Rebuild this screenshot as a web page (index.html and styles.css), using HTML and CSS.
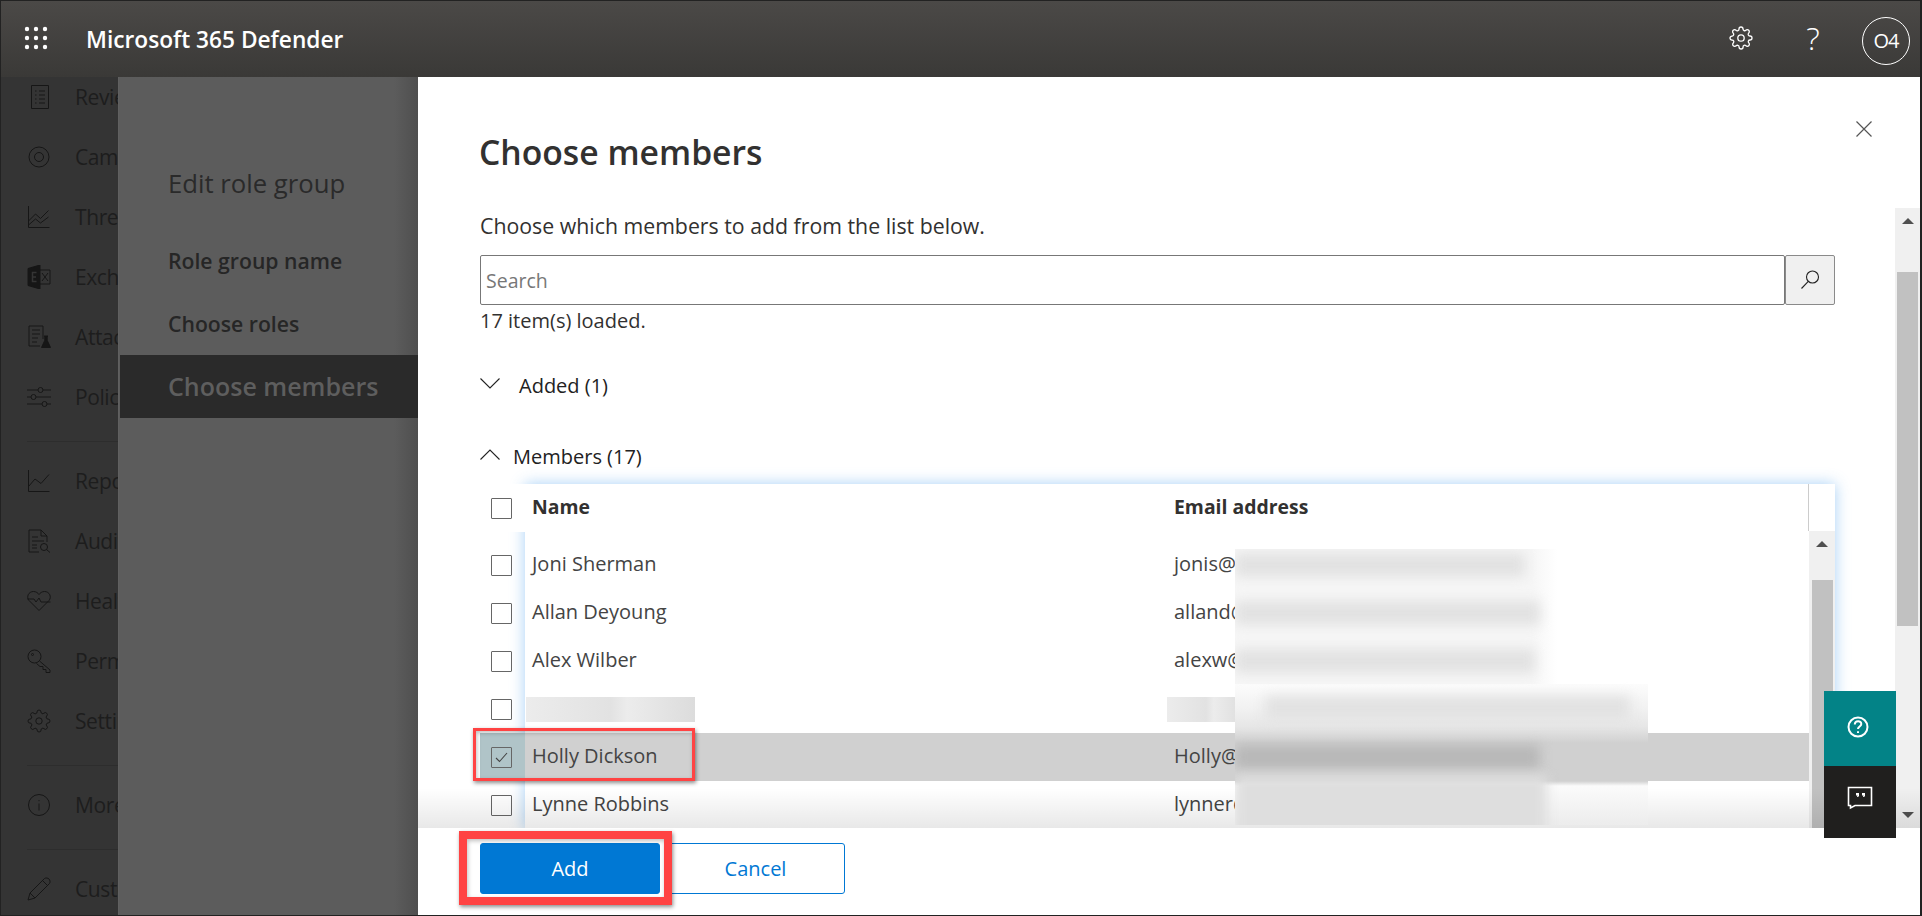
FILE: index.html
```html
<!DOCTYPE html>
<html lang="en">
<head>
    <meta charset="UTF-8">
    <title>Microsoft 365 Defender - Choose members</title>
    <link rel="stylesheet" href="styles.css">
</head>
<body>
    <svg class="defs" width="0" height="0">
        <symbol id="gear" viewBox="0 0 24 24">
            <circle cx="12" cy="12" r="3.2"/>
            <path d="M19.4 15a1.65 1.65 0 0 0 .33 1.82l.06.06a2 2 0 0 1 0 2.83 2 2 0 0 1-2.83 0l-.06-.06a1.65 1.65 0 0 0-1.82-.33 1.65 1.65 0 0 0-1 1.51V21a2 2 0 0 1-2 2 2 2 0 0 1-2-2v-.09A1.65 1.65 0 0 0 9 19.4a1.65 1.65 0 0 0-1.82.33l-.06.06a2 2 0 0 1-2.83 0 2 2 0 0 1 0-2.83l.06-.06a1.65 1.65 0 0 0 .33-1.82 1.65 1.65 0 0 0-1.51-1H3a2 2 0 0 1-2-2 2 2 0 0 1 2-2h.09A1.65 1.65 0 0 0 4.6 9a1.65 1.65 0 0 0-.33-1.82l-.06-.06a2 2 0 0 1 0-2.83 2 2 0 0 1 2.83 0l.06.06a1.65 1.65 0 0 0 1.82.33H9a1.65 1.65 0 0 0 1-1.51V3a2 2 0 0 1 2-2 2 2 0 0 1 2 2v.09a1.65 1.65 0 0 0 1 1.51 1.65 1.65 0 0 0 1.82-.33l.06-.06a2 2 0 0 1 2.83 0 2 2 0 0 1 0 2.83l-.06.06a1.65 1.65 0 0 0-.33 1.82V9a1.65 1.65 0 0 0 1.51 1H21a2 2 0 0 1 2 2 2 2 0 0 1-2 2h-.09a1.65 1.65 0 0 0-1.51 1z"/>
        </symbol>
    </svg>

    <div class="app">
        <header class="topbar">
            <svg class="waffle" width="24" height="24" viewBox="0 0 24 24">
                <circle cx="3" cy="3" r="2.2"/><circle cx="12" cy="3" r="2.2"/><circle cx="21" cy="3" r="2.2"/>
                <circle cx="3" cy="12" r="2.2"/><circle cx="12" cy="12" r="2.2"/><circle cx="21" cy="12" r="2.2"/>
                <circle cx="3" cy="21" r="2.2"/><circle cx="12" cy="21" r="2.2"/><circle cx="21" cy="21" r="2.2"/>
            </svg>
            <span class="brand">Microsoft 365 Defender</span>
            <svg class="top-gear" width="24" height="24"><use href="#gear"/></svg>
            <span class="top-help">?</span>
            <span class="avatar">O4</span>
        </header>

        <div class="main">
            <nav class="sidenav">
                <div class="nav-list">
                    <a class="nav-item">
                        <svg viewBox="0 0 24 24"><path d="M4.5.5h17v23h-17zM8 6h1.5M8 10h1.5M8 14h1.5M8 18h1.5M12 6h6M12 10h6M12 14h6M12 18h6"/></svg>
                        Review
                    </a>
                    <a class="nav-item">
                        <svg viewBox="0 0 24 24"><circle cx="12" cy="12" r="10"/><circle cx="12" cy="12" r="4.5"/></svg>
                        Campaigns
                    </a>
                    <a class="nav-item">
                        <svg viewBox="0 0 24 24"><path d="M1.500 1v21.500h21M1.500 16l7-7 5 4.500 8-8M1.500 20l7-6 5 4 8-6"/></svg>
                        Threat tracker
                    </a>
                    <a class="nav-item">
                        <svg viewBox="0 0 24 24"><path class="fill" d="M1 3.500 13 0v24L1 20.500z"/><path d="M13 5h10v14H13M15 8l6 8M21 8l-6 8"/><path class="cut" d="M9.500 7.500H5.500v9h4M5.500 12h3.500"/></svg>
                        Exchange message trace
                    </a>
                    <a class="nav-item">
                        <svg viewBox="0 0 24 24"><path d="M16 14V1H2v20h11M5 5h8M5 9h8M5 13h6M5 17h5"/><path class="fill" d="M17 11h4l-.8.800v3.500l3.300 7.200H14.500l3.300-7.200v-3.500z"/></svg>
                        Attack simulation training
                    </a>
                    <a class="nav-item">
                        <svg viewBox="0 0 24 24"><path d="M0 5h11M16 5h8M0 12h4M9 12h15M0 19h15M20 19h4"/><circle cx="13.500" cy="5" r="2.500"/><circle cx="6.500" cy="12" r="2.500"/><circle cx="17.500" cy="19" r="2.500"/></svg>
                        Policies &amp; rules
                    </a>
                    <div class="nav-sep"></div>
                    <a class="nav-item">
                        <svg viewBox="0 0 24 24"><path d="M1.500 1v21.500h21M1.500 17.500 8 10l6 4.500 8-9"/></svg>
                        Reports
                    </a>
                    <a class="nav-item">
                        <svg viewBox="0 0 24 24"><path d="M12 23H2V1h12l6 6v6M14 1v6h6M5 8h6M5 12h12M5 16h5M5 19h5"/><circle cx="17" cy="18" r="3.500"/><path d="m19.500 20.500 3.500 3"/></svg>
                        Audit
                    </a>
                    <a class="nav-item">
                        <svg viewBox="0 0 24 24"><path d="M12 21.500 2 11.500C-1 8 1.500 2.500 6.500 2.500c2.500 0 4.500 1.500 5.500 3 1-1.500 3-3 5.500-3 5 0 7.500 5.500 4.500 9zM.5 10H7l2 3 3-4 2 4h9.500"/></svg>
                        Health
                    </a>
                    <a class="nav-item">
                        <svg viewBox="0 0 24 24"><circle cx="7.500" cy="7.500" r="6.500"/><circle cx="5.500" cy="5.500" r="1"/><path d="m12.500 12 10.500 9v2.500h-4v-3h-3v-3h-3l-3.500-3"/></svg>
                        Permissions &amp; roles
                    </a>
                    <a class="nav-item">
                        <svg viewBox="0 0 24 24"><use href="#gear"/></svg>
                        Settings
                    </a>
                    <div class="nav-sep"></div>
                    <a class="nav-item">
                        <svg viewBox="0 0 24 24"><circle cx="12" cy="12" r="10.500"/><path d="M12 10.500v7M12 7v1.200"/></svg>
                        More resources
                    </a>
                    <div class="nav-sep"></div>
                    <a class="nav-item">
                        <svg viewBox="0 0 24 24"><path d="M1 23l2-7L17.500 1.500c1.500-1 3.500-.5 4.500.5s1.500 3 .5 4.500L8 21zM3 16l5 5M15.500 3.500l5 5"/></svg>
                        Customize navigation
                    </a>
                </div>
            </nav>

            <aside class="wizard">
                <h2 class="wizard-title">Edit role group</h2>
                <div class="step">Role group name</div>
                <div class="step">Choose roles</div>
                <div class="step step-active">Choose members</div>
            </aside>

            <section class="panel">
                <div class="panel-head">
                    <h1>Choose members</h1>
                    <svg class="close" width="16" height="16" viewBox="0 0 16 16"><path d="M.5.500l15 15M15.500.500l-15 15"/></svg>
                </div>

                <div class="panel-scroll">
                    <div class="panel-content">
                        <p class="intro">Choose which members to add from the list below.</p>
                        <div class="search">
                            <input class="search-input" type="text" placeholder="Search">
                            <button class="search-btn">
                                <svg width="22" height="22" viewBox="0 0 22 22"><circle cx="13.500" cy="8" r="6"/><path d="M9.300 12.300 2.500 19.500"/></svg>
                            </button>
                        </div>
                        <p class="loaded">17 item(s) loaded.</p>

                        <div class="section-head section-added">
                            <svg width="20" height="11" viewBox="0 0 20 11"><path d="M.5.500 10 10 19.500.500"/></svg>
                            <span>Added (1)</span>
                        </div>
                        <div class="section-head section-members">
                            <svg width="20" height="11" viewBox="0 0 20 11"><path d="M.5 10.500 10 1l9.500 9.500"/></svg>
                            <span>Members (17)</span>
                        </div>

                        <div class="members">
                            <div class="members-head">
                                <div class="cell-check"><span class="checkbox"></span></div>
                                <div class="col-name">Name</div>
                                <div class="col-mail">Email address</div>
                            </div>
                            <div class="members-body">
                                <div class="members-rows">
                                    <div class="row">
                                        <div class="cell-check"><span class="checkbox"></span></div>
                                        <div class="col-name">Joni Sherman</div>
                                        <div class="col-mail">jonis@</div>
                                    </div>
                                    <div class="row">
                                        <div class="cell-check"><span class="checkbox"></span></div>
                                        <div class="col-name">Allan Deyoung</div>
                                        <div class="col-mail">alland@</div>
                                    </div>
                                    <div class="row">
                                        <div class="cell-check"><span class="checkbox"></span></div>
                                        <div class="col-name">Alex Wilber</div>
                                        <div class="col-mail">alexw@</div>
                                    </div>
                                    <div class="row">
                                        <div class="cell-check"><span class="checkbox"></span></div>
                                        <div class="col-name"><span class="smudge smudge-name"></span></div>
                                        <div class="col-mail"><span class="smudge smudge-mail"></span></div>
                                    </div>
                                    <div class="row row-selected">
                                        <div class="cell-check">
                                            <span class="checkbox">
                                                <svg width="17" height="17" viewBox="0 0 17 17"><path d="m3 9 3.500 3.500L14 4"/></svg>
                                            </span>
                                        </div>
                                        <div class="col-name">Holly Dickson</div>
                                        <div class="col-mail">Holly@</div>
                                    </div>
                                    <div class="row">
                                        <div class="cell-check"><span class="checkbox"></span></div>
                                        <div class="col-name">Lynne Robbins</div>
                                        <div class="col-mail">lynner@</div>
                                    </div>
                                </div>
                                <div class="scrollbar scrollbar-inner">
                                    <span class="sb-up"></span>
                                    <span class="sb-thumb"></span>
                                </div>
                            </div>
                        </div>
                    </div>
                    <div class="scrollbar scrollbar-outer">
                        <span class="sb-up"></span>
                        <span class="sb-thumb"></span>
                        <span class="sb-down"></span>
                    </div>
                </div>

                <div class="panel-foot">
                    <button class="btn btn-primary">Add</button>
                    <button class="btn btn-ghost">Cancel</button>
                </div>

                <!-- things laid over the panel -->
                <div class="fade"></div>
                <div class="redact">
                    <span class="redact-line redact-l1"></span>
                    <span class="redact-line redact-l2"></span>
                    <span class="redact-line redact-l3"></span>
                    <span class="redact-line redact-l4"></span>
                    <span class="redact-line redact-l5"></span>
                    <span class="redact-line redact-l6"></span>
                </div>
                <div class="callout callout-holly"></div>
                <div class="callout callout-add"></div>
                <div class="float-btns">
                    <div class="float-help">
                        <svg width="22" height="22" viewBox="0 0 22 22"><circle cx="11" cy="11" r="9.500"/><path d="M7.800 8.500c0-4.300 6.500-4.300 6.500-.5 0 2.500-3.300 2.500-3.300 5"/><path class="dot" d="M11 15.200v1.800"/></svg>
                    </div>
                    <div class="float-chat">
                        <svg width="26" height="24" viewBox="0 0 26 24"><path d="M1.500 1.500h23v18H8L3.500 22v-2.500h-2z"/><path class="dot" d="M9 7h3v3l-1 1h-1l.500-1.500H9zM15 7h3v3l-1 1h-1l.500-1.500H15z"/></svg>
                    </div>
                </div>
            </section>
        </div>
    </div>
</body>
</html>
```

FILE: styles.css
```css
* {
    box-sizing: border-box;
}
body {
    margin: 0;
    background-color: #fff;
    font-family: "Open Sans", "Liberation Sans", sans-serif;
    overflow: hidden;
}
h1, h2, p {
    margin: 0;
    font-weight: normal;
}
.defs {
    position: absolute;
}

.app {
    width: 1922px;
    height: 916px;
    display: flex;
    flex-direction: column;
    border: 1px solid #222;
    border-right-width: 2px;
    overflow: hidden;
}

/* top bar */
.topbar {
    height: 76px;
    flex: none;
    display: flex;
    align-items: center;
    padding-left: 23px;
    background: linear-gradient(#4b4947, #3a3937);
    color: #fff;
    position: relative;
    z-index: 3;
}
.waffle {
    margin-top: -3px;
    fill: #fff;
}
.brand {
    margin-left: 38px;
    font-size: 22.7px;
    font-weight: 600;
}
.top-gear {
    margin-left: auto;
    margin-top: -2px;
    fill: none;
    stroke: #fff;
    stroke-width: 1.3;
}
.top-help {
    width: 24px;
    margin-left: 48px;
    margin-top: -3px;
    text-align: center;
    font-size: 32px;
    font-weight: 300;
    line-height: 1;
}
.avatar {
    width: 48px;
    height: 48px;
    margin: 3px 10px 0 37px;
    display: flex;
    align-items: center;
    justify-content: center;
    border: 1px solid #fff;
    border-radius: 50%;
    font-size: 20px;
    letter-spacing: -1px;
}

.main {
    flex: 1;
    display: flex;
    min-height: 0;
}

/* left navigation, mostly hidden behind the wizard */
.sidenav {
    width: 117px;
    flex: none;
    background-color: #343434;
    overflow: hidden;
}
.nav-list {
    margin-top: -10px;
    padding-left: 26px;
}
.nav-item {
    height: 60px;
    display: flex;
    align-items: center;
    gap: 24px;
    color: #1d1d1d;
    font-size: 21px;
    letter-spacing: -0.4px;
    white-space: nowrap;
}
.nav-item svg {
    width: 24px;
    height: 24px;
    flex: none;
    fill: none;
    stroke: #161616;
    stroke-width: 1;
}
.nav-item svg .fill {
    fill: #161616;
}
.nav-item svg .cut {
    stroke: #343434;
    stroke-width: 1.5;
}
.nav-sep {
    height: 1px;
    margin: 14px 0 9px;
    background-color: #2d2d2d;
}

/* wizard steps */
.wizard {
    width: 300px;
    flex: none;
    padding-top: 82px;
    background: linear-gradient(90deg, #5c5c5c 92%, #4f4f4f);
    border-left: 1px solid #606060;
    color: #262626;
}
.wizard-title {
    height: 50px;
    margin-bottom: 20px;
    padding-left: 49px;
    font-size: 25.7px;
    line-height: 50px;
    color: #2a2a2a;
}
.step {
    height: 63px;
    padding-left: 49px;
    font-size: 21.2px;
    font-weight: 600;
    line-height: 63px;
}
.step-active {
    margin-left: 1px;
    padding-left: 48px;
    background-color: #2a2a2a;
    color: #5e5e5e;
    font-size: 25px;
}

/* flyout panel */
.panel {
    flex: 1;
    min-width: 0;
    display: flex;
    flex-direction: column;
    position: relative;
    background-color: #fff;
}
.panel-head {
    height: 131px;
    flex: none;
    display: flex;
    align-items: flex-start;
    justify-content: space-between;
    padding: 44px 48px 0 61px;
}
.panel-head h1 {
    margin-top: 15px;
    font-size: 33.7px;
    font-weight: 600;
    line-height: 1;
    color: #323130;
}
.close {
    fill: none;
    stroke: #555;
    stroke-width: 1.2;
}
.panel-scroll {
    height: 620px;
    flex: none;
    display: flex;
}
.panel-content {
    flex: 1;
    min-width: 0;
    padding: 0 60px 0 62px;
    overflow: hidden;
}
.intro {
    height: 38px;
    font-size: 21.3px;
    line-height: 36px;
    color: #323130;
}
.search {
    margin-top: 9px;
    display: flex;
    height: 50px;
}
.search-input {
    flex: 1;
    min-width: 0;
    padding: 0 5px;
    border: 1px solid #777;
    border-radius: 2px;
    font: inherit;
    font-size: 19.5px;
}
.search-input::placeholder {
    color: #777;
    opacity: 1;
}
.search-btn {
    width: 50px;
    flex: none;
    padding: 0;
    display: flex;
    align-items: center;
    justify-content: center;
    background-color: #f0f0f0;
    border: 1px solid #8a8a8a;
    border-radius: 2px;
}
.search-btn svg {
    fill: none;
    stroke: #222;
    stroke-width: 1.1;
}
.loaded {
    height: 34px;
    font-size: 20px;
    line-height: 32px;
    color: #323130;
}
.section-head {
    height: 40px;
    display: flex;
    align-items: center;
    font-size: 20px;
    color: #222;
}
.section-head svg {
    margin-top: -4px;
    fill: none;
    stroke: #222;
    stroke-width: 1.1;
}
.section-added {
    margin-top: 26px;
    gap: 19px;
}
.section-members {
    margin-top: 31px;
    gap: 13px;
}

/* members table */
.members {
    margin-top: 8px;
    position: relative;
}
.members::before {
    content: "";
    position: absolute;
    left: 45px;
    top: 0;
    right: 0;
    height: 345px;
    box-shadow: 0 0 14px rgba(60, 150, 235, 0.45);
}
.members-head,
.row {
    display: grid;
    grid-template-columns: 45px 649px 1fr;
    align-items: center;
    font-size: 20px;
    color: #444;
}
.members-head {
    height: 48px;
    position: relative;
    background-color: #fff;
    border-right: 26px solid #fff;
    font-size: 19.4px;
    font-weight: 700;
    color: #323130;
}
.members-head::after {
    content: "";
    position: absolute;
    right: 0;
    top: 0;
    width: 1px;
    height: 47px;
    background-color: #ccc;
}
.members-body {
    display: flex;
    position: relative;
}
.members-rows {
    flex: 1;
    min-width: 0;
    padding-top: 9px;
}
.row {
    height: 48px;
}
.cell-check {
    display: flex;
    justify-content: center;
    padding-right: 3px;
    align-self: stretch;
    align-items: center;
}
.col-name {
    padding-left: 7px;
    padding-bottom: 4px;
}
.col-mail {
    position: relative;
    padding-bottom: 4px;
}
.checkbox {
    width: 21px;
    height: 21px;
    display: flex;
    align-items: center;
    justify-content: center;
    border: 1.5px solid #666;
    border-radius: 1px;
}
.checkbox svg {
    fill: none;
    stroke: #444;
    stroke-width: 1.1;
}
.row-selected {
    background-color: #d0d0d0;
}
.row-selected .cell-check {
    background-color: #b0c4c8;
}
.smudge {
    display: block;
    height: 25px;
    margin-top: 5px;
    background: linear-gradient(90deg, #ececec, #e2e2e2 50%, #ececec 60%, #dcdcdc);
}
.smudge-name {
    width: 169px;
    margin-left: -6px;
}
.smudge-mail {
    width: 78px;
    margin-left: -7px;
}

/* scrollbars */
.scrollbar {
    flex: none;
    display: flex;
    flex-direction: column;
    align-items: center;
    background-color: #f0f0f0;
}
.scrollbar-outer {
    width: 25px;
}
.scrollbar-inner {
    width: 26px;
    height: 297px;
    margin-top: -1px;
    position: relative;
    z-index: 1;
}
.sb-up,
.sb-down {
    width: 0;
    height: 0;
    flex: none;
    border-left: 6px solid transparent;
    border-right: 6px solid transparent;
}
.sb-up {
    margin-top: 10px;
    border-bottom: 6px solid #505050;
}
.sb-down {
    margin-top: auto;
    margin-bottom: 10px;
    border-top: 6px solid #505050;
}
.sb-thumb {
    width: 21px;
    flex: none;
    background-color: #c1c1c1;
}
.scrollbar-outer .sb-thumb {
    height: 354px;
    margin-top: 48px;
}
.scrollbar-inner .sb-thumb {
    flex: 1;
    margin-top: 33px;
}

/* footer */
.panel-foot {
    flex: 1;
    display: flex;
    gap: 6px;
    padding: 15px 0 0 62px;
    position: relative;
}
.btn {
    height: 51px;
    border-radius: 3px;
    font: inherit;
    font-size: 20px;
}
.btn-primary {
    width: 180px;
    border: 1px solid #0078d4;
    background-color: #0078d4;
    color: #fff;
}
.btn-ghost {
    width: 179px;
    border: 1.5px solid #0078d4;
    background-color: #fff;
    color: #0078d4;
}

/* overlays */
.fade {
    position: absolute;
    z-index: 2;
    left: 0;
    right: 0;
    top: 711px;
    height: 40px;
    background: linear-gradient(rgba(0, 0, 0, 0), rgba(0, 0, 0, 0.09));
    pointer-events: none;
}
.redact {
    position: absolute;
    z-index: 2;
    left: 817px;
    top: 472px;
    width: 413px;
    height: 276px;
    overflow: hidden;
    background:
        linear-gradient(90deg, #f6f6f6 72%, #fff 78%) top left / 100% 135px no-repeat,
        linear-gradient(#fcfcfc 135px, #f1f1f1 160px, #e6e6e6 178px, #d0d0d0 194px, #d0d0d0 232px, #fbfbfb 237px, #ececec 276px);
}
.redact-line {
    position: absolute;
    left: 0;
    height: 24px;
    background-color: #e2e2e2;
    filter: blur(6px);
}
.redact-l1 {
    top: 4px;
    width: 290px;
}
.redact-l2 {
    top: 52px;
    width: 305px;
}
.redact-l3 {
    top: 100px;
    width: 300px;
}
.redact-l4 {
    top: 147px;
    left: 30px;
    width: 365px;
}
.redact-l5 {
    top: 196px;
    width: 305px;
    background-color: #b8b8b8;
}
.redact-l6 {
    top: 226px;
    width: 312px;
    height: 70px;
    background-color: #dedede;
}
.callout {
    position: absolute;
    z-index: 2;
    border-style: solid;
    border-color: #ff4343;
    box-shadow: 1px 2px 4px rgba(0, 0, 0, 0.45), inset 1px 2px 4px rgba(0, 0, 0, 0.25);
    pointer-events: none;
}
.callout-holly {
    left: 55px;
    top: 651px;
    width: 222px;
    height: 53px;
    border-width: 3px;
}
.callout-add {
    left: 41px;
    top: 754px;
    width: 213px;
    height: 74px;
    border-width: 8px;
}
.float-btns {
    position: absolute;
    z-index: 2;
    left: 1406px;
    top: 614px;
    width: 72px;
}
.float-help,
.float-chat {
    display: flex;
    align-items: center;
    justify-content: center;
}
.float-help {
    height: 75px;
    padding-bottom: 4px;
    background-color: #038387;
}
.float-help svg,
.float-chat svg {
    fill: none;
    stroke: #fff;
    stroke-width: 2;
}
.float-help svg {
    margin-right: 4px;
}
.float-chat {
    height: 72px;
    padding-bottom: 8px;
    background-color: #201f1e;
}
.float-chat svg {
    stroke-width: 1.6;
}
.float-chat svg .dot {
    fill: #fff;
    stroke: none;
}
```
